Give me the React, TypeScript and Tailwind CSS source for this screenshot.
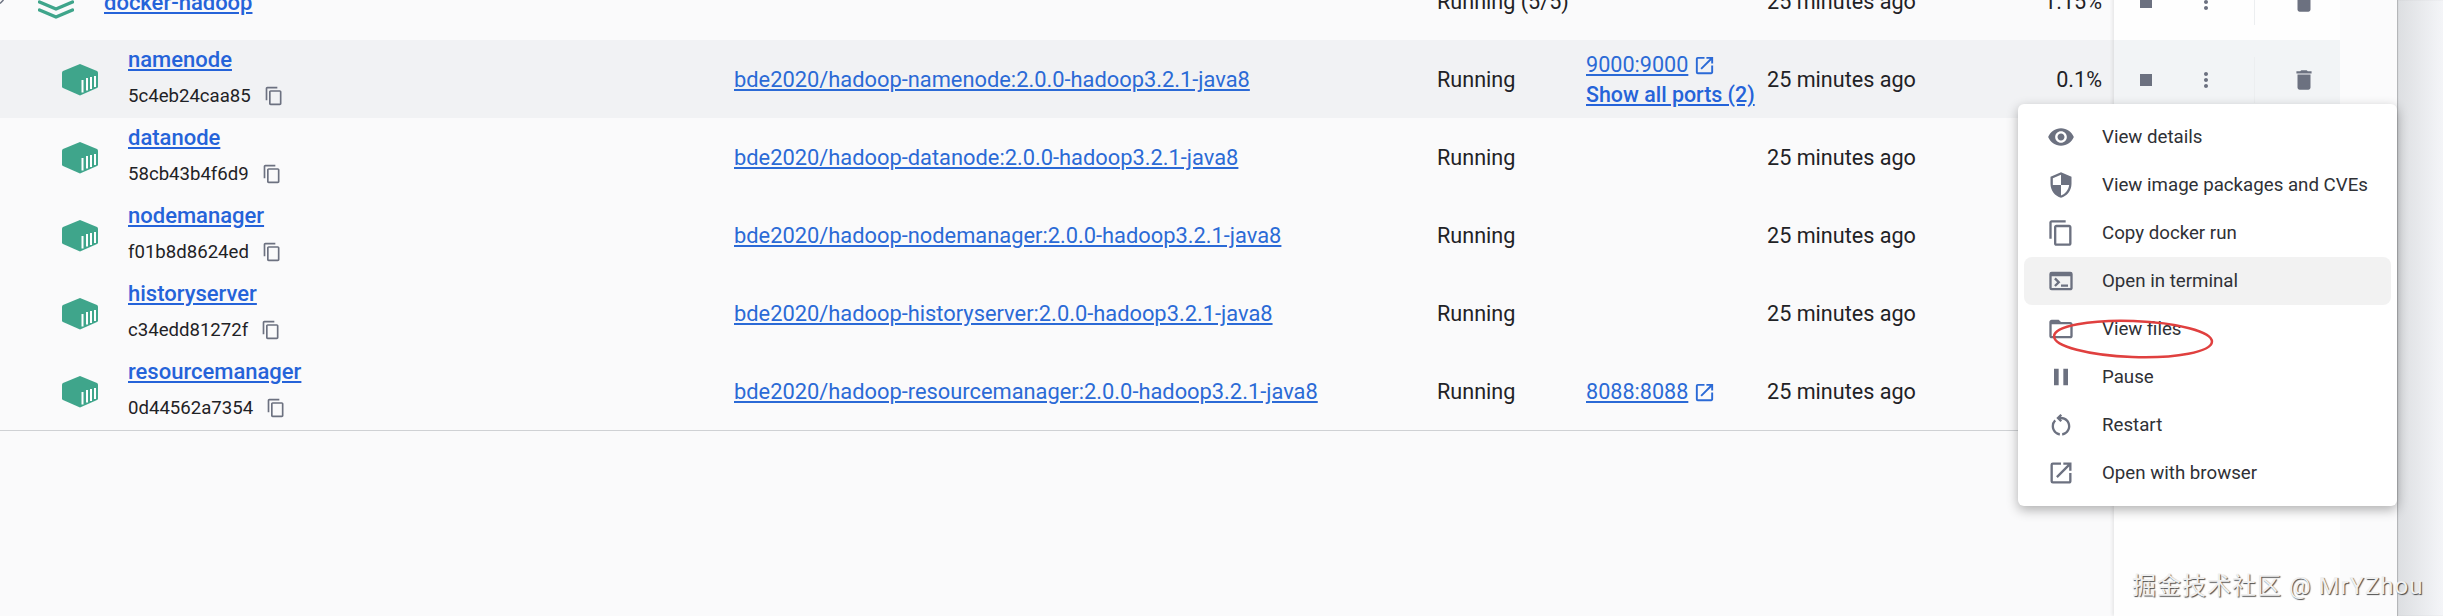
import React from 'react';
import {
  MdContentCopy,
  MdDelete,
  MdFolderOpen,
  MdMoreVert,
  MdOpenInNew,
  MdOutlineRestartAlt,
  MdPause,
  MdSecurity,
  MdStop,
  MdTerminal,
  MdVisibility,
} from 'react-icons/md';

const containers = [
  { name: 'namenode', id: '5c4eb24caa85', image: 'bde2020/hadoop-namenode:2.0.0-hadoop3.2.1-java8', cpu: '0.1%', port: '9000:9000', more: 'Show all ports (2)' },
  { name: 'datanode', id: '58cb43b4f6d9', image: 'bde2020/hadoop-datanode:2.0.0-hadoop3.2.1-java8' },
  { name: 'nodemanager', id: 'f01b8d8624ed', image: 'bde2020/hadoop-nodemanager:2.0.0-hadoop3.2.1-java8' },
  { name: 'historyserver', id: 'c34edd81272f', image: 'bde2020/hadoop-historyserver:2.0.0-hadoop3.2.1-java8' },
  { name: 'resourcemanager', id: '0d44562a7354', image: 'bde2020/hadoop-resourcemanager:2.0.0-hadoop3.2.1-java8', port: '8088:8088' },
];

const menuItems = [
  { label: 'View details', icon: <MdVisibility size={28} /> },
  { label: 'View image packages and CVEs', icon: <MdSecurity size={28} /> },
  { label: 'Copy docker run', icon: <MdContentCopy size={28} /> },
  { label: 'Open in terminal', icon: <MdTerminal size={28} />, active: true },
  { label: 'View files', icon: <MdFolderOpen size={28} /> },
  { label: 'Pause', icon: <MdPause size={28} /> },
  { label: 'Restart', icon: <MdOutlineRestartAlt size={28} /> },
  { label: 'Open with browser', icon: <MdOpenInNew size={28} /> },
];

function ContainerIcon() {
  return (
    <svg width="36" height="32" viewBox="0 0 36 32">
      <path d="M18 0 L35 7 Q36 7.500 36 8.500 L36 22.500 Q36 23.500 35 24 L18 31.500 L1 24 Q0 23.500 0 22.500 L0 8.500 Q0 7.500 1 7 Z" fill="#3fa58b" />
      <path d="M20.500 28.500 V16 M25 26.500 V14 M29 25 V13 M33 23 V12" stroke="#fff" strokeWidth="2" />
    </svg>
  );
}

function StackIcon() {
  return (
    <svg width="36" height="36" viewBox="0 0 36 36" fill="none" stroke="#3fa58b" strokeWidth="3.500" strokeLinecap="round" strokeLinejoin="round">
      <path d="M1.500 18 L18 25 L34.500 18" />
      <path d="M1.500 26 L18 33 L34.500 26" />
    </svg>
  );
}

function Actions({ hover }: { hover?: boolean }) {
  return (
    <div className={`flex h-[78px] w-[226px] items-center pt-[2px] text-[#6c7180] ${hover ? 'bg-[#f2f4f6]' : 'bg-[#fefefe]'}`}>
      <div className="flex w-[64px] justify-center"><MdStop size={24} /></div>
      <div className="flex w-[56px] justify-center"><MdMoreVert size={24} /></div>
      <div className="ml-[20px] h-[46px] w-px bg-[#eceef0]" />
      <div className="flex flex-1 justify-center pl-[13px]"><MdDelete size={26} /></div>
    </div>
  );
}

function Row({ hover, children }: { hover?: boolean; children: React.ReactNode }) {
  return <div className={`flex h-[78px] items-center pt-[2px] ${hover ? 'bg-[#f1f2f4]' : ''}`}>{children}</div>;
}

export default function App() {
  return (
    <div className="relative flex h-[616px] w-full overflow-hidden bg-[#fafafb] font-['Roboto',sans-serif] text-[21.6px] text-[#1f2226]">
      <div className="-mt-[38px] flex min-w-0 flex-1">
        <div className="w-[2114px]">
          <Row>
            <div className="ml-[38px] w-[66px]"><StackIcon /></div>
            <a className="w-[1333px] text-[22px] font-medium text-[#2563d9] underline">docker-hadoop</a>
            <span className="w-[330px]">Running (5/5)</span>
            <span className="w-[240px]">25 minutes ago</span>
            <span className="w-[95px] text-right">1.15%</span>
          </Row>
          {containers.map((c, i) => (
            <Row key={c.name} hover={i === 0}>
              <div className="ml-[62px] w-[66px]"><ContainerIcon /></div>
              <div className="flex w-[606px] flex-col gap-[10px] pb-[4px]">
                <a className="text-[22px] leading-[26px] font-medium text-[#2563d9] underline">{c.name}</a>
                <div className="flex items-center gap-[13px] text-[18.6px] leading-[26px]">
                  {c.id}
                  <MdContentCopy size={20} className="text-[#6c7180]" />
                </div>
              </div>
              <a className="w-[703px] text-[21.85px] text-[#2b6ad6] underline">{c.image}</a>
              <span className="w-[149px]">Running</span>
              <div className="flex w-[181px] flex-col gap-[4px]">
                {c.port && (
                  <div className="flex items-center gap-[5px] leading-[26px] text-[#2b6ad6]">
                    <a className="underline">{c.port}</a>
                    <MdOpenInNew size={23} />
                  </div>
                )}
                {c.more && <a className="text-[21.4px] leading-[26px] whitespace-nowrap font-medium text-[#2563d9] underline">{c.more}</a>}
              </div>
              <span className="w-[240px]">25 minutes ago</span>
              <span className="w-[95px] text-right">{c.cpu}</span>
            </Row>
          ))}
          <div className="border-t border-[#cfd1d4]" />
        </div>
        <div className="w-[283px] bg-[#fbfbfc] shadow-[-2px_0_3px_rgba(0,0,0,0.07)]">
          <div className="h-full w-[226px] bg-[#fefefe]">
            <Actions />
            {containers.map((c, i) => (
              <Actions key={c.name} hover={i === 0} />
            ))}
          </div>
        </div>
      </div>
      <div className="w-[46px] bg-gradient-to-r from-[#dcdee1] to-[#f4f5f8] shadow-[inset_1px_0_1px_rgba(0,0,0,0.2)]" />

      <svg className="absolute top-0 left-0" width="6" height="5" viewBox="0 0 6 5" fill="none">
        <path d="M0 3.500 L3.500 0" stroke="#6c7180" strokeWidth="1.500" />
      </svg>

      <div className="absolute top-[104px] left-[2018px] flex h-[402px] w-[379px] flex-col rounded-[6px] bg-white px-[6px] py-[9px] shadow-[0_4px_12px_rgba(0,0,0,0.3)]">
        {menuItems.map((item) => (
          <div key={item.label} className={`flex h-[48px] shrink-0 items-center rounded-[8px] pl-[23px] ${item.active ? 'bg-[#f2f2f2]' : ''}`}>
            <span className="flex w-[55px] text-[#6c7180]">{item.icon}</span>
            <span className="text-[18.7px] text-[#2f3136]">{item.label}</span>
          </div>
        ))}
      </div>

      <svg className="absolute top-[316px] left-[2050px]" width="168" height="46" viewBox="0 0 168 46" fill="none">
        <ellipse cx="83" cy="23" rx="79" ry="18" transform="rotate(2 83 23)" stroke="#e0403f" strokeWidth="2.500" />
      </svg>

      <span className="absolute top-[568px] left-[2132px] font-['Roboto','Noto_Sans_CJK_SC',sans-serif] text-[24px] tracking-[1px] whitespace-nowrap text-[#f0f0f0] [text-shadow:1px_1px_1px_rgba(0,0,0,0.7)]">
        掘金技术社区 @ MrYZhou
      </span>
    </div>
  );
}
